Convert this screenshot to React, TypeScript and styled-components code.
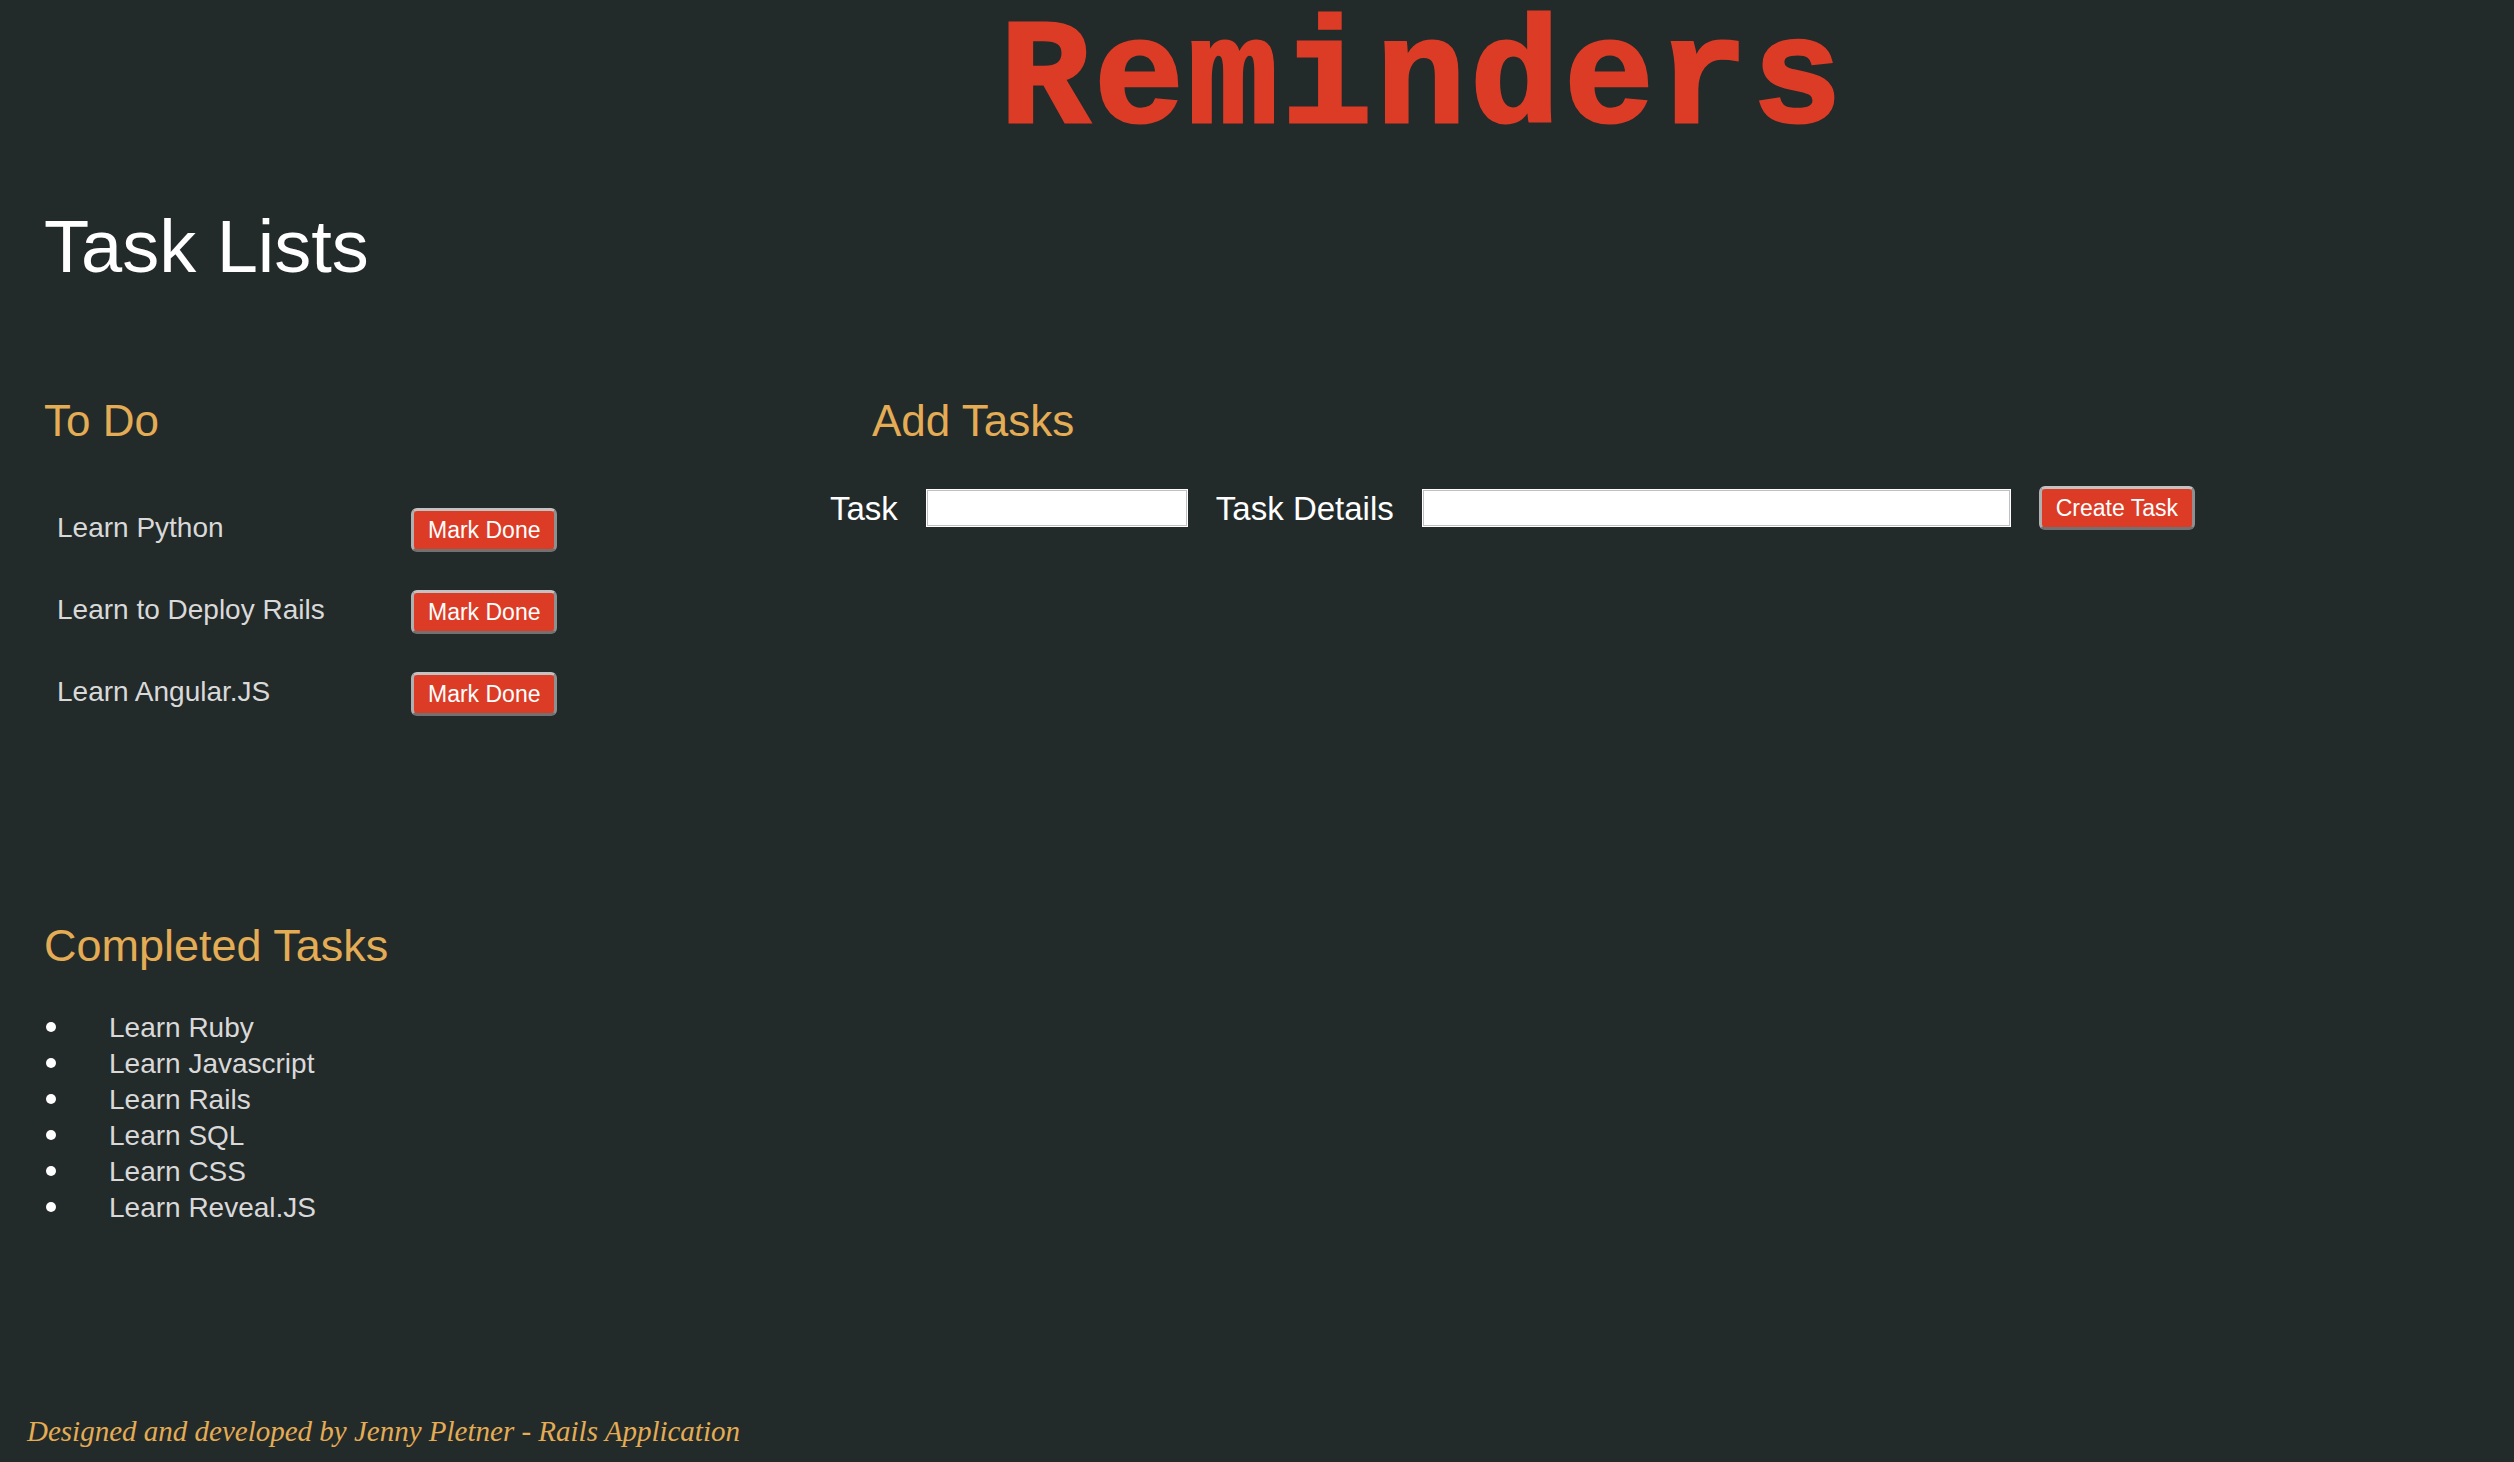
import React from 'react';
import styled, { createGlobalStyle } from 'styled-components';

const GlobalStyle = createGlobalStyle`
  html, body {
    margin: 0;
    padding: 0;
    background: #232a2a;
  }
  body {
    font-family: 'Liberation Sans', Arial, Helvetica, sans-serif;
  }
`;

const Page = styled.div`
  min-height: 100vh;
  display: flex;
  flex-direction: column;
  background: #232a2a;
  box-sizing: border-box;
  padding-bottom: 16px;
`;

const Banner = styled.h1`
  margin: 0;
  padding: 0 0 0 332px;
  text-align: center;
  font-family: 'Liberation Mono', 'Courier New', monospace;
  font-weight: 700;
  font-size: 150px;
  letter-spacing: 4px;
  line-height: 1.1;
  color: #dc3c26;
  -webkit-text-stroke: 3px #dc3c26;
`;

const PageTitle = styled.h2`
  margin: 45px 0 0 0;
  padding-left: 44px;
  font-size: 74px;
  font-weight: 400;
  line-height: 1;
  color: #ffffff;
`;

const Columns = styled.div`
  display: flex;
  margin-top: 115px;
`;

const LeftColumn = styled.div`
  width: 830px;
  box-sizing: border-box;
  padding-left: 44px;
`;

const RightColumn = styled.div`
  flex: 1;
`;

const SectionHeading = styled.h3<{ $indent?: number; $size?: number }>`
  margin: 0;
  padding-left: ${(p) => p.$indent ?? 0}px;
  font-size: ${(p) => p.$size ?? 44}px;
  font-weight: 400;
  line-height: 1;
  color: #e4ac54;
`;

const TodoList = styled.div`
  margin-top: 46px;
  display: grid;
  grid-template-columns: 354px auto;
  grid-auto-rows: 82px;
  align-items: center;
  justify-items: start;
  padding-left: 13px;
`;

const TodoText = styled.span`
  font-size: 28px;
  line-height: 1;
  color: #d9d9d9;
  margin-bottom: 5px;
`;

const RedButton = styled.button`
  box-sizing: border-box;
  height: 44px;
  padding: 0 14px;
  font-family: 'Liberation Sans', Arial, sans-serif;
  font-size: 23px;
  color: #ffffff;
  background: #dc3c26;
  border: 3px solid;
  border-color: #c2c2c2 #8f8f8f #717171 #b0b0b0;
  border-radius: 6px;
  cursor: pointer;
`;

const FormRow = styled.form`
  margin-top: 43px;
  display: flex;
  align-items: center;
  gap: 28px;
`;

const FieldLabel = styled.label`
  font-size: 33px;
  line-height: 1;
  color: #ffffff;
`;

const TextField = styled.input<{ $width: number }>`
  box-sizing: border-box;
  width: ${(p) => p.$width}px;
  height: 38px;
  background: #ffffff;
  border: 1px solid #ffffff;
  box-shadow: inset 0 0 0 1px #c0c0c0;
  outline: none;
  padding: 0 6px;
  font-size: 20px;
`;

const CompletedSection = styled.section`
  margin-top: 188px;
  padding-left: 44px;
`;

const DoneList = styled.ul`
  list-style: none;
  margin: 42px 0 0 0;
  padding: 0 0 0 2px;
`;

const DoneItem = styled.li`
  display: flex;
  align-items: center;
  height: 36px;
  font-size: 28px;
  color: #d9d9d9;

  &::before {
    content: '';
    width: 10px;
    height: 10px;
    border-radius: 50%;
    background: #ffffff;
    margin-right: 53px;
    margin-top: -2px;
  }
`;

const Footer = styled.footer`
  margin-top: auto;
  padding-left: 27px;
  font-family: 'Liberation Serif', 'Times New Roman', serif;
  font-style: italic;
  font-size: 29px;
  line-height: 1;
  color: #e4ac54;
`;

const todos = ['Learn Python', 'Learn to Deploy Rails', 'Learn Angular.JS'];
const completed = [
  'Learn Ruby',
  'Learn Javascript',
  'Learn Rails',
  'Learn SQL',
  'Learn CSS',
  'Learn Reveal.JS',
];

export default function App() {
  return (
    <Page>
      <GlobalStyle />
      <Banner>Reminders</Banner>
      <PageTitle>Task Lists</PageTitle>

      <Columns>
        <LeftColumn>
          <SectionHeading>To Do</SectionHeading>
          <TodoList>
            {todos.map((t) => (
              <React.Fragment key={t}>
                <TodoText>{t}</TodoText>
                <RedButton type="button">Mark Done</RedButton>
              </React.Fragment>
            ))}
          </TodoList>
        </LeftColumn>

        <RightColumn>
          <SectionHeading $indent={42}>Add Tasks</SectionHeading>
          <FormRow onSubmit={(e) => e.preventDefault()}>
            <FieldLabel htmlFor="task">Task</FieldLabel>
            <TextField id="task" $width={262} />
            <FieldLabel htmlFor="details">Task Details</FieldLabel>
            <TextField id="details" $width={589} />
            <RedButton type="submit">Create Task</RedButton>
          </FormRow>
        </RightColumn>
      </Columns>

      <CompletedSection>
        <SectionHeading $size={45}>Completed Tasks</SectionHeading>
        <DoneList>
          {completed.map((c) => (
            <DoneItem key={c}>{c}</DoneItem>
          ))}
        </DoneList>
      </CompletedSection>

      <Footer>Designed and developed by Jenny Pletner - Rails Application</Footer>
    </Page>
  );
}
